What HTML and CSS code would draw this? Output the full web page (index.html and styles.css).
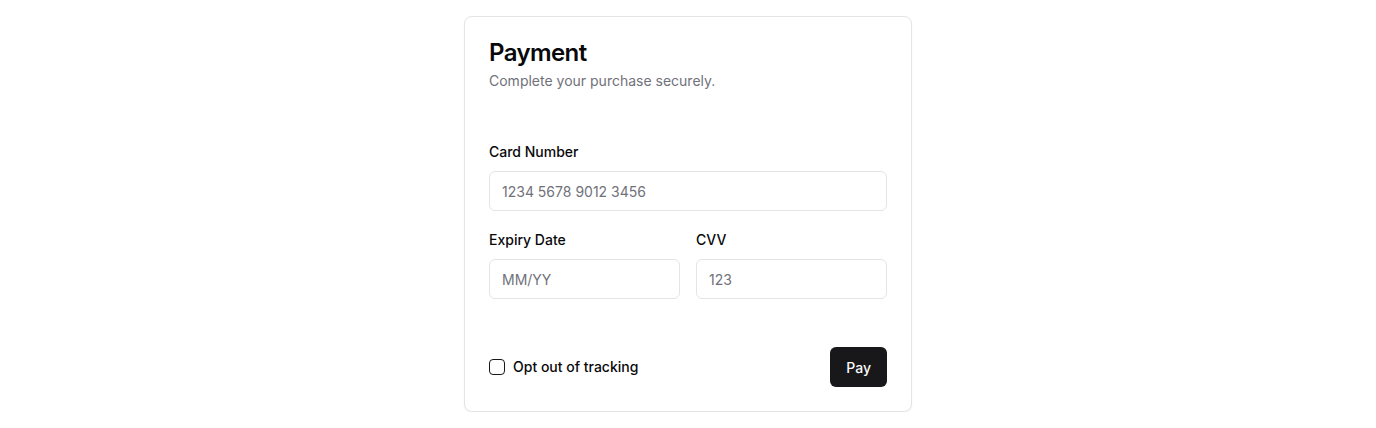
FILE: index.html
```html
<!DOCTYPE html>
<html lang="en">
<head>
<meta charset="utf-8">
<title>Payment</title>
<link rel="stylesheet" href="styles.css">
</head>
<body>
<main class="page">
  <form class="card">
    <header class="card-header">
      <h1 class="card-title">Payment</h1>
      <p class="card-desc">Complete your purchase securely.</p>
    </header>
    <div class="card-content">
      <div class="field">
        <label class="label" for="card">Card Number</label>
        <input class="input" id="card" type="text" placeholder="1234 5678 9012 3456">
      </div>
      <div class="row">
        <div class="field">
          <label class="label" for="exp">Expiry Date</label>
          <input class="input" id="exp" type="text" placeholder="MM/YY">
        </div>
        <div class="field">
          <label class="label" for="cvv">CVV</label>
          <input class="input" id="cvv" type="text" placeholder="123">
        </div>
      </div>
    </div>
    <footer class="card-footer">
      <label class="check">
        <span class="box"></span>
        <span class="check-text">Opt out of tracking</span>
      </label>
      <button class="btn" type="button">Pay</button>
    </footer>
  </form>
</main>
</body>
</html>
```
FILE: styles.css
```css
* { box-sizing: border-box; }
html, body { margin: 0; padding: 0; background: #ffffff; }
body {
  font-family: Inter, "Liberation Sans", sans-serif;
  color: #09090b;
}
.page {
  display: flex;
  justify-content: center;
  padding-top: 16px;
}
.card {
  width: 448px;
  border: 1px solid #e4e4e7;
  border-radius: 8px;
  background: #fff;
  box-shadow: 0 1px 2px rgba(0,0,0,0.05);
  margin: 0;
}
.card-header {
  padding: 24px 24px 24px;
  display: flex;
  flex-direction: column;
  gap: 6px;
}
.card-title {
  margin: 0;
  font-size: 24px;
  line-height: 24px;
  font-weight: 600;
  letter-spacing: -0.6px;
}
.card-desc {
  margin: 0;
  font-size: 14px;
  line-height: 20px;
  color: #71717a;
}
.card-content {
  padding: 30px 24px 24px;
  display: flex;
  flex-direction: column;
  gap: 22px;
}
.field {
  display: flex;
  flex-direction: column;
  gap: 12px;
  min-width: 0;
}
.row {
  display: grid;
  grid-template-columns: 1fr 1fr;
  gap: 16px;
}
.label {
  font-size: 14px;
  line-height: 14px;
  font-weight: 500;
}
.input {
  height: 40px;
  width: 100%;
  border: 1px solid #e4e4e7;
  border-radius: 6px;
  padding: 0 12px;
  font-family: inherit;
  font-size: 14px;
  color: #09090b;
  background: #fff;
  outline: none;
}
.input::placeholder { color: #71717a; }
.card-footer {
  padding: 24px 24px 24px;
  display: flex;
  align-items: center;
  justify-content: space-between;
}
.check {
  display: flex;
  align-items: center;
  gap: 8px;
}
.box {
  width: 16px;
  height: 16px;
  border: 1px solid #18181b;
  border-radius: 4px;
}
.check-text {
  font-size: 14px;
  line-height: 14px;
  font-weight: 500;
}
.btn {
  height: 40px;
  padding: 0 16px;
  border: none;
  border-radius: 6px;
  background: #18181b;
  color: #fafafa;
  font-family: inherit;
  font-size: 14px;
  font-weight: 500;
}
```
